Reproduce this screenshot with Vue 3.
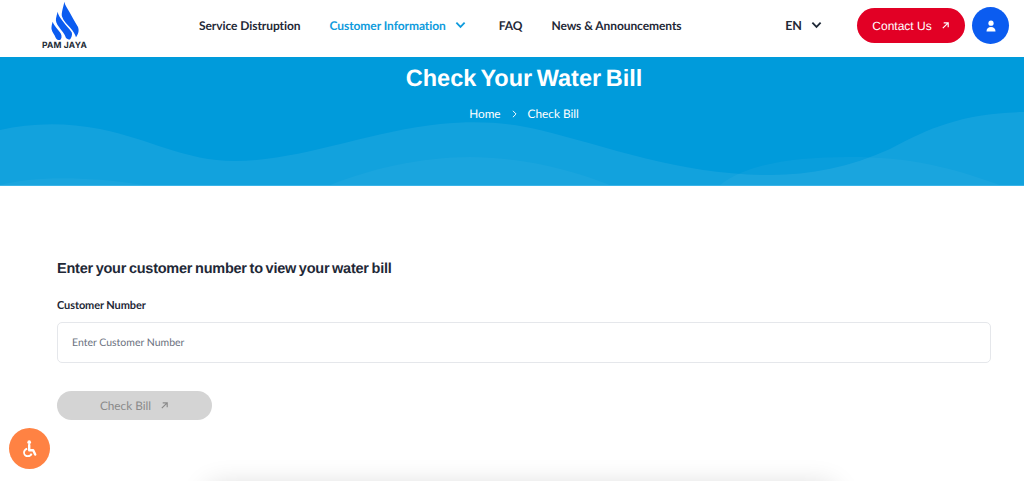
<script setup>
const navItems = [
  { label: "Service Distruption" },
  { label: "Customer Information", active: true, hasMenu: true },
  { label: "FAQ" },
  { label: "News & Announcements" },
];
</script>

<template>
  <div class="page">
    <header class="header">
      <a class="logo">
        <svg class="logo-mark" viewBox="49 1 30 40" width="30" height="40">
          <path d="M63.300 1.700C64 5 66 8 68.300 11.700C70.500 16 73.500 21 77 27C78 30 78 33 75 37.300C74 34 72.500 31.500 69 27.500C66 24 62.500 21 61 16.500C60 13 62.500 7 63.300 1.700Z" />
          <path d="M56.700 11.700C57 14.500 59 17.500 62 21.500C65 25.500 68.500 29 70.800 32.500C71.500 35 70.500 37.500 69 39.500C67 39.500 65.800 38.800 65 38C63.800 33.500 60.500 31 58 27C55.500 24 54.500 21 55 18.500C55.500 16 56 14 56.700 11.700Z" />
          <path d="M51.700 21.700C52.500 24.500 54.500 26.500 56.700 29.500C59 32 61 34.500 60.500 37.500C60 39 59.500 40 59 40C57 40.300 55.500 39.500 54.800 38C53.500 34.500 51.300 32.500 50.500 29C50.300 26.500 51 24 51.700 21.700Z" />
        </svg>
        <span class="logo-text">PAM JAYA</span>
      </a>

      <nav class="nav">
        <a v-for="item in navItems" :key="item.label" class="nav-link" :class="{ active: item.active }">
          {{ item.label }}
          <svg v-if="item.hasMenu" class="chevron" viewBox="0 0 12 8" width="11" height="8">
            <path d="M1.500 1.500L6 6L10.500 1.500" />
          </svg>
        </a>
      </nav>

      <div class="actions">
        <button class="lang">
          EN
          <svg class="chevron" viewBox="0 0 12 8" width="11" height="8">
            <path d="M1.500 1.500L6 6L10.500 1.500" />
          </svg>
        </button>
        <button class="contact">
          Contact Us
          <svg class="arrow" viewBox="0 0 10 10" width="9" height="9">
            <path d="M2 8L8 2M3 2H8V7" />
          </svg>
        </button>
        <button class="avatar">
          <svg viewBox="0 0 12 12" width="12" height="12">
            <circle cx="6" cy="3.200" r="2.600" />
            <path d="M1.500 11.500C1.500 8.500 3.200 7 6 7C8.800 7 10.500 8.500 10.500 11.500Z" />
          </svg>
        </button>
      </div>
    </header>

    <section class="hero">
      <svg class="waves" viewBox="0 0 1024 128" preserveAspectRatio="none">
        <path class="wave-back" d="M0 73C30 66 65 65 100 72C150 82 185 104 235 104C300 104 370 74 440 67C480 63 510 66 540 73C610 90 680 118 770 118C810 118 850 110 890 92C930 70 965 56 1024 55V128H0Z" />
        <path class="wave-front" d="M0 128C30 120 80 118 145 128ZM330 128C370 112 420 100 470 100C520 100 570 112 610 128Z" />
        <path class="wave-front" d="M720 128C745 108 790 100 850 100C910 100 950 110 1000 128Z" />
      </svg>
      <h1 class="hero-title">Check Your Water Bill</h1>
      <div class="breadcrumb">
        <span>Home</span>
        <svg class="crumb-sep" viewBox="0 0 6 10" width="5" height="8">
          <path d="M1 1L5 5L1 9" />
        </svg>
        <span>Check Bill</span>
      </div>
    </section>

    <main class="content">
      <h2 class="form-title">Enter your customer number to view your water bill</h2>
      <label class="field-label" for="customer-number">Customer Number</label>
      <input id="customer-number" class="field-input" type="text" placeholder="Enter Customer Number" />
      <button class="submit" disabled>
        Check Bill
        <svg class="arrow" viewBox="0 0 10 10" width="9" height="9">
          <path d="M2 8L8 2M3 2H8V7" />
        </svg>
      </button>
    </main>

    <div class="next-card"></div>

    <button class="a11y">
      <svg viewBox="0 0 20 22" width="16" height="18">
        <circle cx="9" cy="2.500" r="2.300" class="a11y-fill" />
        <path d="M9 6V12.500H14L16.500 18" class="a11y-line" />
        <path d="M6.500 10.500C4 11.500 2.500 13.300 2.500 15.500C2.500 18.300 4.800 20 7.300 20C9.500 20 11.300 18.800 12 16.800" class="a11y-thin" />
      </svg>
    </button>
  </div>
</template>

<style>
html,
body {
  overflow: hidden;
  background: #fff;
}
</style>

<style scoped>
.page {
  height: 481px;
  overflow: hidden;
  font-family: Lato, "Liberation Sans", sans-serif;
  color: #1f2937;
  background: #fff;
  text-rendering: geometricPrecision;
}

button {
  border: none;
  background: none;
  padding: 0;
  font: inherit;
  color: inherit;
  text-rendering: geometricPrecision;
}

.header {
  display: flex;
  align-items: center;
  height: 57px;
  padding: 0 15px 6px 42px;
  box-sizing: border-box;
}

.logo {
  display: flex;
  flex-direction: column;
  align-items: center;
  align-self: flex-start;
  width: 45px;
  margin-top: 1px;
}

.logo-mark {
  fill: #0b5cf0;
  margin-bottom: 1px;
}

.logo-text {
  font-family: Inter, sans-serif;
  font-size: 8.500px;
  font-weight: 700;
  line-height: 9px;
  letter-spacing: 0.2px;
  white-space: nowrap;
  color: #222b36;
}

.nav {
  display: flex;
  align-items: center;
  gap: 29px;
  margin-left: 112px;
}

.nav-link {
  display: flex;
  align-items: center;
  gap: 9px;
  font-size: 12px;
  font-weight: 700;
  line-height: 20px;
  letter-spacing: -0.07px;
  white-space: nowrap;
}

.nav-link.active {
  color: #0f9bdc;
}

.nav-link .chevron {
  margin-right: 4px;
}

.chevron {
  fill: none;
  stroke: currentColor;
  stroke-width: 2;
  margin-top: -2px;
}

.actions {
  display: flex;
  align-items: center;
  margin-left: auto;
}

.lang {
  display: flex;
  align-items: center;
  gap: 9px;
  margin-right: 35px;
  font-size: 12.500px;
  font-weight: 700;
}

.contact {
  display: flex;
  align-items: center;
  justify-content: center;
  gap: 9px;
  width: 108px;
  height: 35px;
  margin-right: 7px;
  border-radius: 18px;
  background: #e20025;
  color: #fff;
  font-family: "Liberation Sans", sans-serif;
  font-size: 12px;
}

.arrow {
  fill: none;
  stroke: currentColor;
  stroke-width: 1.300;
}

.avatar {
  display: flex;
  align-items: center;
  justify-content: center;
  width: 37px;
  height: 37px;
  border-radius: 50%;
  background: #0b5cf0;
  fill: #fff;
}

.hero {
  position: relative;
  height: 129px;
  box-sizing: border-box;
  padding: 7px 0 0 24px;
  overflow: hidden;
  background: #009bdb;
  border-bottom: 1px solid #3ab4e8;
  color: #fff;
  text-align: center;
}

.waves {
  position: absolute;
  left: 0;
  top: 0;
  width: 100%;
  height: 128px;
  fill: #fff;
}

.wave-back {
  fill-opacity: 0.07;
}

.wave-front {
  fill-opacity: 0.035;
}

.hero-title {
  position: relative;
  margin: 0;
  font-family: "Liberation Sans", sans-serif;
  font-size: 23.500px;
  font-weight: 700;
  line-height: 28px;
  word-spacing: -2px;
}

.breadcrumb {
  position: relative;
  display: flex;
  justify-content: center;
  align-items: center;
  gap: 11px;
  margin-top: 12px;
  font-size: 11.800px;
  line-height: 20px;
}

.crumb-sep {
  fill: none;
  stroke: #fff;
  stroke-width: 1.200;
}

.content {
  display: flex;
  flex-direction: column;
  align-items: flex-start;
  padding: 73px 33px 0 57px;
}

.form-title {
  margin: 0 0 18px;
  font-family: "Liberation Sans", sans-serif;
  font-size: 14.500px;
  font-weight: 700;
  line-height: 20px;
  letter-spacing: -0.24px;
  word-spacing: -1px;
}

.field-label {
  margin-bottom: 7px;
  font-size: 11px;
  font-weight: 700;
  line-height: 18px;
  letter-spacing: -0.1px;
}

.field-input {
  width: 100%;
  height: 41px;
  box-sizing: border-box;
  padding: 1px 14px 0;
  border: 1px solid #e5e7eb;
  border-radius: 5px;
  outline: none;
  font-family: Lato, sans-serif;
  font-size: 10.500px;
  color: #1f2937;
  text-rendering: geometricPrecision;
}

.field-input::placeholder {
  color: #6b7280;
  opacity: 1;
}

.submit {
  display: flex;
  align-items: center;
  justify-content: center;
  gap: 9px;
  width: 155px;
  height: 29px;
  margin-top: 28px;
  border-radius: 15px;
  background: #d4d4d4;
  color: #8a8a8a;
  font-size: 11.800px;
}

.next-card {
  width: 628px;
  height: 120px;
  margin: 66px 0 0 207px;
  border-radius: 10px;
  box-shadow: 0 0 28px rgba(0, 0, 0, 0.16);
}

.a11y {
  position: fixed;
  left: 9px;
  top: 428px;
  display: flex;
  align-items: center;
  justify-content: center;
  width: 41px;
  height: 41px;
  border-radius: 50%;
  background: #ff8243;
}

.a11y-fill {
  fill: #fff;
}

.a11y-line {
  fill: none;
  stroke: #fff;
  stroke-width: 3;
  stroke-linejoin: round;
  stroke-linecap: round;
}

.a11y-thin {
  fill: none;
  stroke: #fff;
  stroke-width: 2.200;
}
</style>
